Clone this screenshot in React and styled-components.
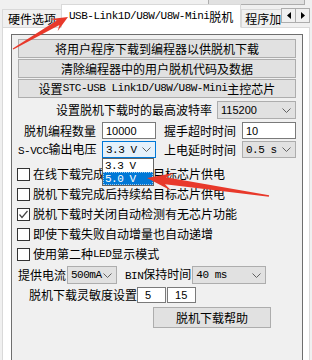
import styled, { createGlobalStyle } from 'styled-components'

const GlobalStyle = createGlobalStyle`
  html, body {
    margin: 0;
    padding: 0;
    background: #f0f0f0;
  }
  body {
    width: 312px;
    height: 360px;
    overflow: hidden;
    font-family: "Noto Sans CJK SC", "Noto Sans", sans-serif;
    font-size: 12px;
    color: #000;
  }
`

const Window = styled.div`
  position: relative;
  width: 312px;
  height: 360px;
  overflow: hidden;
  display: flex;
  flex-direction: column;
`

const TopStrip = styled.div`
  height: 5px;
  display: flex;
  justify-content: flex-end;
  align-items: flex-end;
  padding-right: 7px;
  overflow: hidden;
`

const TopButton = styled.div`
  flex-shrink: 0;
  width: 97px;
  height: 20px;
  box-sizing: border-box;
  background: #e1e1e1;
  border: 1px solid #adadad;
`

const TabBar = styled.div`
  position: relative;
  z-index: 1;
  height: 23px;
  margin-bottom: -1px;
  display: flex;
  align-items: flex-end;
  padding-left: 2px;
`

const Tab = styled.div`
  box-sizing: border-box;
  height: ${p => (p.$active ? 24 : 19)}px;
  padding: 0 ${p => (p.$active ? 7 : 5)}px;
  display: flex;
  align-items: center;
  white-space: nowrap;
  background: ${p => (p.$active ? '#fff' : '#f0f0f0')};
  border: 1px solid #d9d9d9;
  border-bottom: ${p => (p.$active ? '1px solid #fff' : '1px solid #d9d9d9')};
  margin-left: ${p => (p.$active ? -1 : 0)}px;
  flex-shrink: 0;
`

const ClippedTab = styled(Tab)`
  flex: 1;
  flex-shrink: 1;
  min-width: 0;
  overflow: hidden;
  border-right: none;
  padding-left: 3px;
`

const Scroller = styled.div`
  align-self: flex-start;
  margin-top: 3px;
  margin-right: 2px;
  display: flex;
`

const ScrollBtn = styled.div`
  width: 15px;
  height: 15px;
  box-sizing: border-box;
  background: #f0f0f0;
  border: 1px solid #adadad;
  display: flex;
  align-items: center;
  justify-content: center;
  & + & {
    margin-left: -1px;
  }
`

const Mono = styled.span`
  font-family: "Liberation Mono", "DejaVu Sans Mono", monospace;
  font-size: 11px;
  letter-spacing: -0.5px;
`

const TabPage = styled.div`
  flex: 1;
  display: flex;
  flex-direction: column;
  margin: 0 2px;
  padding: 6px 6px 0 8px;
  background: #fff;
  border: 1px solid #d9d9d9;
  border-bottom: none;
`

const Panel = styled.div`
  flex: 1;
  display: flex;
  flex-direction: column;
  padding: 4px 6px 0 6px;
  background: #f0f0f0;
  border: 1px solid #6e6e6e;
  border-bottom: none;
`

const Button = styled.div`
  box-sizing: border-box;
  height: ${p => p.$h || 19}px;
  width: ${p => (p.$w ? `${p.$w}px` : 'auto')};
  margin-left: ${p => p.$left || 0}px;
  margin-top: ${p => p.$top || 0}px;
  margin-bottom: 1px;
  display: flex;
  align-items: center;
  justify-content: center;
  white-space: nowrap;
  background: #e1e1e1;
  border: 1px solid #adadad;
  line-height: 1;
`

const Row = styled.div`
  display: flex;
  align-items: center;
  height: ${p => p.$h}px;
  margin-top: ${p => p.$top || 0}px;
  justify-content: ${p => (p.$end ? 'flex-end' : 'flex-start')};
  padding-left: ${p => p.$indent || 0}px;
  white-space: nowrap;
`

const PairGrid = styled.div`
  display: grid;
  grid-template-columns: 78px 54px 74px 54px;
  column-gap: 6px;
  align-items: center;
  height: ${p => p.$h}px;
  margin-top: ${p => p.$top || 0}px;
  white-space: nowrap;
`

const Label = styled.span`
  text-align: ${p => (p.$right ? 'right' : 'left')};
  margin-right: ${p => p.$gap || 0}px;
  line-height: 1;
`

const Input = styled.div`
  box-sizing: border-box;
  width: ${p => (p.$w ? `${p.$w}px` : '100%')};
  height: ${p => p.$h || 17}px;
  padding-left: ${p => p.$pad ?? 3}px;
  display: flex;
  align-items: center;
  background: #fff;
  border: 1px solid #7a7a7a;
  font-family: "Liberation Sans", Arial, sans-serif;
  font-size: 11px;
  & + & {
    margin-left: 1px;
  }
`

const SelectBox = styled.div`
  position: relative;
  box-sizing: border-box;
  width: ${p => (p.$w ? `${p.$w}px` : '100%')};
  height: ${p => p.$h || 17}px;
  padding: 0 4px 0 3px;
  display: flex;
  align-items: center;
  justify-content: space-between;
  background: ${p => (p.$focus ? '#e5f1fb' : '#e1e1e1')};
  border: 1px solid ${p => (p.$focus ? '#0078d7' : '#adadad')};
`

const Value = styled.span`
  font-family: "Liberation Sans", Arial, sans-serif;
  font-size: 11px;
  line-height: 1;
`

const DropList = styled.div`
  position: absolute;
  top: calc(100% + 1px);
  left: -1px;
  width: 52px;
  box-sizing: border-box;
  background: #fff;
  border: 1px solid #646464;
  z-index: 3;
`

const DropItem = styled.div`
  height: 13px;
  display: flex;
  align-items: center;
  padding-left: 2px;
  box-sizing: border-box;
  background: ${p => (p.$active ? '#0078d7' : '#fff')};
  color: ${p => (p.$active ? '#fff' : '#000')};
  outline: ${p => (p.$active ? '1px dotted #9cc8ee' : 'none')};
  outline-offset: -1px;
`

const CheckList = styled.div`
  display: flex;
  flex-direction: column;
  margin-top: 6px;
  margin-left: -1px;
`

const CheckRow = styled.div`
  height: 20px;
  display: flex;
  align-items: center;
  white-space: nowrap;
  line-height: 1;
`

const Box = styled.div`
  width: 13px;
  height: 13px;
  box-sizing: border-box;
  margin-right: 3px;
  background: #fff;
  border: 1px solid #333;
  display: flex;
  align-items: center;
  justify-content: center;
`

const Overlay = styled.svg`
  position: absolute;
  left: 0;
  top: 0;
  pointer-events: none;
  z-index: 5;
`

const Chevron = () => (
  <svg width="9" height="5" viewBox="0 0 9 5">
    <polyline points="0.5,0.5 4.5,4.5 8.5,0.5" fill="none" stroke="#606060" strokeWidth="1" />
  </svg>
)

const Tri = ({ dir }) => (
  <svg width="4" height="7" viewBox="0 0 4 7">
    {dir === 'left'
      ? <polygon points="4,0 0,3.5 4,7" fill="#000" />
      : <polygon points="0,0 4,3.5 0,7" fill="#000" />}
  </svg>
)

const Check = ({ checked, children }) => (
  <CheckRow>
    <Box>
      {checked && (
        <svg width="11" height="11" viewBox="0 0 11 11">
          <polyline points="1.5,5.5 4,8.5 9.5,2" fill="none" stroke="#444" strokeWidth="1.2" />
        </svg>
      )}
    </Box>
    {children}
  </CheckRow>
)

const Select = ({ value, mono, children, ...rest }) => (
  <SelectBox {...rest}>
    {mono ? <Mono>{value}</Mono> : <Value>{value}</Value>}
    <Chevron />
    {children}
  </SelectBox>
)

// tapered red arrow like a screenshot annotation tool draws
const arrowPath = (x1, y1, x2, y2, head, headW, shaftW, tailW) => {
  const len = Math.hypot(x2 - x1, y2 - y1)
  const ux = (x2 - x1) / len
  const uy = (y2 - y1) / len
  const nx = -uy
  const ny = ux
  const bx = x2 - ux * head
  const by = y2 - uy * head
  const cx = x2 - ux * head * 0.72
  const cy = y2 - uy * head * 0.72
  const pts = [
    [x2, y2],
    [bx + nx * headW, by + ny * headW],
    [cx + nx * shaftW, cy + ny * shaftW],
    [x1 + nx * tailW, y1 + ny * tailW],
    [x1 - nx * tailW, y1 - ny * tailW],
    [cx - nx * shaftW, cy - ny * shaftW],
    [bx - nx * headW, by - ny * headW],
  ]
  return pts.map(p => p.map(v => v.toFixed(1)).join(',')).join(' ')
}

const App = () => {
  return (
    <Window>
      <GlobalStyle />
      <TopStrip>
        <TopButton />
      </TopStrip>

      <TabBar>
        <Tab>硬件选项</Tab>
        <Tab $active>
          <Mono>USB-Link1D/U8W/U8W-Mini</Mono>脱机
        </Tab>
        <ClippedTab>程序加密后传输</ClippedTab>
        <Scroller>
          <ScrollBtn><Tri dir="left" /></ScrollBtn>
          <ScrollBtn><Tri dir="right" /></ScrollBtn>
        </Scroller>
      </TabBar>

      <TabPage>
        <Panel>
          <Button>将用户程序下载到编程器以供脱机下载</Button>
          <Button>清除编程器中的用户脱机代码及数据</Button>
          <Button>设置<Mono>STC-USB Link1D/U8W/U8W-Mini</Mono>主控芯片</Button>

          <Row $h={18} $top={2} $end>
            <Label $gap={5}>设置脱机下载时的最高波特率</Label>
            <Select $w={79} $h={18} value="115200" />
          </Row>

          <PairGrid $h={17} $top={3}>
            <Label $right>脱机编程数量</Label>
            <Input>10000</Input>
            <Label $right>握手超时时间</Label>
            <Input>10</Input>
          </PairGrid>

          <PairGrid $h={17} $top={2}>
            <Label $right><Mono>S-VCC</Mono>输出电压</Label>
            <Select $focus mono value="3.3 V">
              <DropList>
                <DropItem><Mono>3.3 V</Mono></DropItem>
                <DropItem $active><Mono>5.0 V</Mono></DropItem>
              </DropList>
            </Select>
            <Label $right>上电延时时间</Label>
            <Select mono value="0.5 s" />
          </PairGrid>

          <CheckList>
            <Check>在线下载完成后持续给目标芯片供电</Check>
            <Check>脱机下载完成后持续给目标芯片供电</Check>
            <Check checked>脱机下载时关闭自动检测有无芯片功能</Check>
            <Check>即使下载失败自动增量也自动递增</Check>
            <Check>使用第二种<Mono>LED</Mono>显示模式</Check>
          </CheckList>

          <Row $h={18} $top={2}>
            <Label $gap={1}>提供电流</Label>
            <Select $w={50} $h={18} mono value="500mA" />
            <Label $gap={1} style={{ marginLeft: 8 }}><Mono>BIN</Mono>保持时间</Label>
            <Select $w={74} $h={18} mono value="40 ms" />
          </Row>

          <Row $h={16} $top={3} $indent={11}>
            <Label>脱机下载灵敏度设置</Label>
            <Input $w={29} $h={16} $pad={7}>5</Input>
            <Input $w={29} $h={16} $pad={7}>15</Input>
          </Row>

          <Button $w={118} $h={21} $left={135} $top={4}>脱机下载帮助</Button>
        </Panel>
      </TabPage>

      <Overlay width="312" height="360">
        <polygon points={arrowPath(13, 49, 68, 17, 16, 7, 2.6, 0.5)} fill="#e8392b" />
        <polygon points={arrowPath(269, 196, 147, 178, 26, 9, 3.6, 0.7)} fill="#e8392b" />
      </Overlay>
    </Window>
  )
}

export default App
